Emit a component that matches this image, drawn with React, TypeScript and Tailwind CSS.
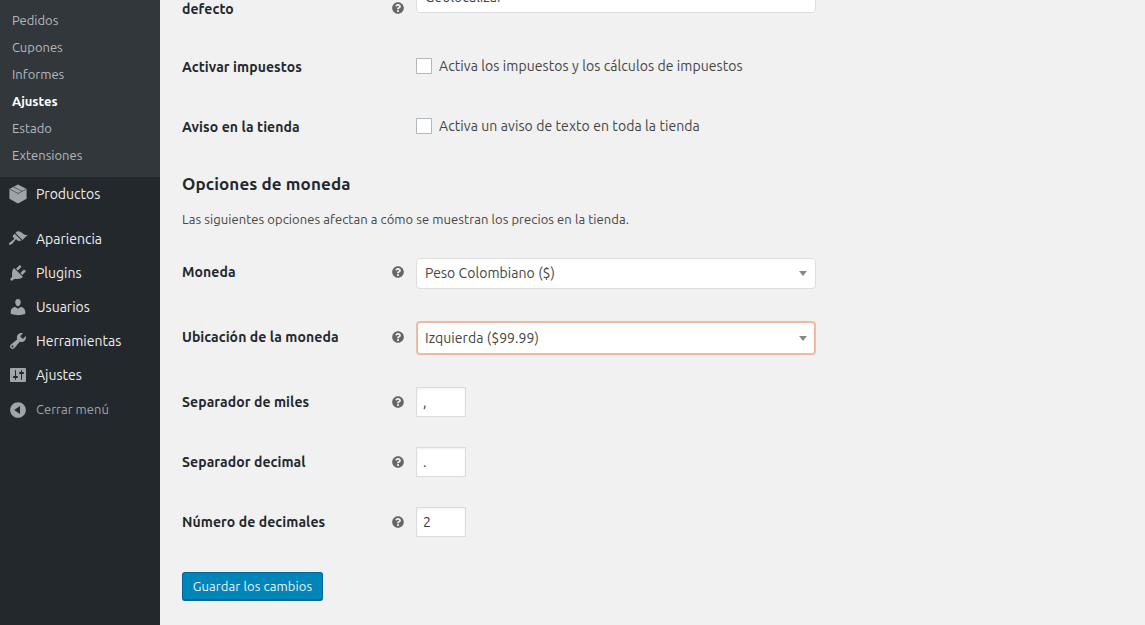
import type { ReactNode } from "react";
import { FaQuestionCircle } from "react-icons/fa";

const font = "font-['Ubuntu','Noto_Sans','Open_Sans',sans-serif]";

const sub = ["Pedidos", "Cupones", "Informes", "Ajustes", "Estado", "Extensiones"];

const paths: Record<string, string> = {
  Apariencia:
    "M14.48 11.06L7.41 3.99l1.5-1.5c.5-.56 2.3-.47 3.51.32 1.21.8 1.43 1.28 2.91 2.1 1.18.64 2.45 1.26 4.45.85zm-.71.71L6.7 4.7 4.93 6.47c-.39.39-.39 1.02 0 1.41l1.06 1.06c.39.39.39 1.03 0 1.42-.6.6-1.43 1.11-2.21 1.69-.35.26-.7.53-1.01.84C1.43 13.23.4 14.84 1.2 15.6c.77.8 2.39-.23 3.74-1.58.31-.31.58-.66.85-1.02.57-.77 1.09-1.61 1.68-2.2.39-.39 1.02-.39 1.41 0l1.06 1.06c.39.39 1.02.39 1.41 0z",
  Plugins:
    "M13.11 4.36L9.87 7.6 8 5.73l3.24-3.24c.35-.34 1.05-.2 1.56.32.52.51.66 1.21.31 1.55zm-8 1.77l.91-1.12 9.01 9.01-1.19.84c-.71.71-2.63 1.16-3.82 1.16H6.14L4.9 17.26c-.59.59-1.54.59-2.12 0-.59-.58-.59-1.53 0-2.12l1.24-1.24v-3.88c0-1.13.4-3.19 1.09-3.89zm7.26 3.97l3.24-3.24c.34-.35 1.04-.21 1.55.31.52.51.66 1.21.31 1.55l-3.24 3.25z",
  Usuarios:
    "M10 9.25c-2.27 0-2.73-3.44-2.73-3.44C7 4.02 7.82 2 9.97 2c2.16 0 2.98 2.02 2.71 3.81 0 0-.41 3.44-2.68 3.44zm0 2.57L12.72 10c2.39 0 4.52 2.33 4.52 4.53v2.49s-3.65 1.13-7.24 1.13c-3.65 0-7.24-1.13-7.24-1.13v-2.49c0-2.25 1.94-4.48 4.47-4.48z",
  Herramientas:
    "M16.68 9.77c-1.34 1.34-3.3 1.67-4.95.99l-5.41 6.52c-.99.99-2.59.99-3.58 0s-.99-2.59 0-3.57l6.52-5.42c-.68-1.65-.35-3.61.99-4.95 1.28-1.28 3.12-1.62 4.72-1.06l-2.89 2.89 2.82 2.82 2.86-2.87c.53 1.58.18 3.39-1.08 4.65zM3.81 16.21c.4.39 1.04.39 1.43 0 .4-.4.4-1.04 0-1.43-.39-.4-1.03-.4-1.43 0-.39.39-.39 1.03 0 1.43z",
  Ajustes:
    "M18 16V4c0-.55-.45-1-1-1H3c-.55 0-1 .45-1 1v12c0 .55.45 1 1 1h14c.55 0 1-.45 1-1zM8 11h1c.55 0 1 .45 1 1s-.45 1-1 1H8v1.5c0 .28-.22.5-.5.5s-.5-.22-.5-.5V13H6c-.55 0-1-.45-1-1s.45-1 1-1h1V5.5c0-.28.22-.5.5-.5s.5.22.5.5V11zm5-2h-1c-.55 0-1-.45-1-1s.45-1 1-1h1V5.5c0-.28.22-.5.5-.5s.5.22.5.5V7h1c.55 0 1 .45 1 1s-.45 1-1 1h-1v5.5c0 .28-.22.5-.5.5s-.5-.22-.5-.5V9z",
  Collapse: "M10 2.16c4.33 0 7.84 3.51 7.84 7.84s-3.51 7.84-7.84 7.84S2.16 14.33 2.16 10 5.71 2.16 10 2.16zm2 11.72V6.12L6.18 9.97z",
};

function MenuIcon({ name }: { name: string }) {
  return (
    <svg viewBox="0 0 20 20" className="w-5 h-5 shrink-0 text-[#a0a5aa]" fill="currentColor">
      <path d={paths[name]} />
    </svg>
  );
}

function BoxIcon() {
  return (
    <svg viewBox="0 0 20 20" className="w-5 h-5 shrink-0 text-[#a0a5aa]">
      <path d="M10 .6l8.6 4.3v9.9L10 19.4l-8.6-4.6V4.9z" fill="currentColor" />
      <path d="M1.6 5.2L10 9.4l8.4-4.2M10 9.4v1.2M5.6 3l8.6 4.3" fill="none" stroke="#4a4f54" strokeWidth="0.8" />
    </svg>
  );
}

function Help({ className = "" }: { className?: string }) {
  return <FaQuestionCircle className={`w-3 h-3 text-[#666666] shrink-0 ${className}`} />;
}

function Row({
  label,
  help = true,
  className = "",
  labelClass = "",
  helpClass = "",
  children,
}: {
  label: ReactNode;
  help?: boolean;
  className?: string;
  labelClass?: string;
  helpClass?: string;
  children: ReactNode;
}) {
  return (
    <div className={`flex items-center ${className}`}>
      <div className={`w-[210px] text-[14px] font-bold text-[#23282d] leading-[20px] tracking-[0.08px] ${labelClass}`}>{label}</div>
      <div className="w-[24px] flex items-center">{help && <Help className={helpClass} />}</div>
      {children}
    </div>
  );
}

function Select({ value, focus }: { value: string; focus?: boolean }) {
  return (
    <div
      className={`w-[400px] flex items-center justify-between bg-white rounded-[4px] text-[14px] text-[#444444] tracking-[0.06px] ${
        focus ? "h-[34px] pl-[7px] pr-[7px] pt-[1px] border-2 border-[#f3b8a4]" : "h-[31px] pl-2 pr-2 border border-[#dddddd]"
      }`}
    >
      <span>{value}</span>
      <span className="w-0 h-0 border-x-[4px] border-x-transparent border-t-[5px] border-t-[#888888]" />
    </div>
  );
}

function Small({ value }: { value: string }) {
  return (
    <div className="w-[50px] h-[30px] bg-white border border-[#dddddd] shadow-[inset_0_1px_2px_rgba(0,0,0,0.07)] flex items-center pl-[6px] text-[14px] text-[#32373c]">
      {value}
    </div>
  );
}

function Check({ text }: { text: string }) {
  return (
    <div className="flex items-center gap-[7px] text-[14px] text-[#444444] tracking-[0.085px] -mt-[2px]">
      <span className="w-4 h-4 bg-white border border-[#b4b9be] block" />
      <span>{text}</span>
    </div>
  );
}

export default function App() {
  return (
    <div className={`h-[625px] w-[1145px] overflow-hidden flex bg-[#f1f1f1] ${font}`}>
      <aside className="w-[160px] shrink-0 bg-[#23282d] text-[14px]">
        <div className="bg-[#32373c] h-[177px] pt-[7px]">
          {sub.map((s) => (
            <div
              key={s}
              className={`h-[27px] pl-3 flex items-center text-[13px] ${s === "Ajustes" ? "font-bold text-white" : "text-[#b4b9be]"}`}
            >
              {s}
            </div>
          ))}
        </div>
        <div className="h-[34px] flex items-center gap-[8px] pl-[8px] text-[#eeeeee]">
          <BoxIcon />
          <span>Productos</span>
        </div>
        <div className="mt-[11px]">
          {["Apariencia", "Plugins", "Usuarios", "Herramientas", "Ajustes"].map((m) => (
            <div key={m} className="h-[34px] flex items-center gap-[8px] pl-[8px] text-[#eeeeee]">
              <MenuIcon name={m} />
              <span>{m}</span>
            </div>
          ))}
          <div className="h-[34px] pt-[2px] flex items-center gap-[8px] pl-[8px] text-[13px] text-[#a0a5aa]">
            <MenuIcon name="Collapse" />
            <span>Cerrar menú</span>
          </div>
        </div>
      </aside>
      <main className="flex-1 pl-[22px] min-w-0">
        <div className="-mt-[18px]">
          <Row label="defecto" className="h-[31px]" labelClass="mt-[22px]" helpClass="mt-[21px]">
            <Select value="Geolocalizar" />
          </Row>
          <Row label="Activar impuestos" help={false} className="mt-[44px] h-[20px]">
            <Check text="Activa los impuestos y los cálculos de impuestos" />
          </Row>
          <Row label="Aviso en la tienda" help={false} className="mt-[40px] h-[20px]">
            <Check text="Activa un aviso de texto en toda la tienda" />
          </Row>
          <h2 className="mt-[35px] text-[17px] font-bold text-[#23282d] leading-[24px] tracking-[0.1px]">Opciones de moneda</h2>
          <p className="mt-[13px] text-[13px] text-[#444444] leading-[20px] tracking-[0.07px]">
            Las siguientes opciones afectan a cómo se muestran los precios en la tienda.
          </p>
          <Row label="Moneda" className="mt-[29px] h-[31px]" labelClass="pb-[4px]" helpClass="mb-[4px]">
            <Select value="Peso Colombiano ($)" />
          </Row>
          <Row label="Ubicación de la moneda" className="mt-[32px] h-[34px]" labelClass="pb-[2px]" helpClass="mb-[2px]">
            <Select value="Izquierda ($99.99)" focus />
          </Row>
          <Row label="Separador de miles" className="mt-[32px] h-[30px]">
            <Small value="," />
          </Row>
          <Row label="Separador decimal" className="mt-[30px] h-[30px]">
            <Small value="." />
          </Row>
          <Row label="Número de decimales" className="mt-[30px] h-[30px]">
            <Small value="2" />
          </Row>
          <button className="mt-[35px] w-[141px] h-[29px] pt-[1px] rounded-[3px] bg-[#0085ba] border border-[#006799] border-b-2 text-[#f1f1f1] text-[13px] tracking-[0.12px] flex items-center justify-center">
            Guardar los cambios
          </button>
        </div>
      </main>
    </div>
  );
}
